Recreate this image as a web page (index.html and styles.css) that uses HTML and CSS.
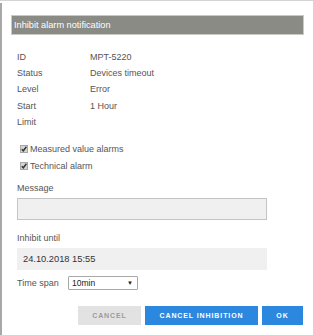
FILE: index.html
```html
<!DOCTYPE html>
<html>
<head>
<meta charset="utf-8">
<link rel="stylesheet" href="styles.css">
</head>
<body>
<div class="frame">
  <div class="dialog">
    <div class="titlebar">Inhibit alarm notification</div>
    <div class="info">
      <div class="row"><span class="lbl">ID</span><span class="val">MPT-5220</span></div>
      <div class="row"><span class="lbl">Status</span><span class="val">Devices timeout</span></div>
      <div class="row"><span class="lbl">Level</span><span class="val">Error</span></div>
      <div class="row"><span class="lbl">Start</span><span class="val">1 Hour</span></div>
      <div class="row"><span class="lbl">Limit</span><span class="val"></span></div>
    </div>
    <div class="checks">
      <label class="check"><svg class="cb" width="8" height="8" viewBox="0 0 8 8"><rect x="0.5" y="0.5" width="7" height="7" fill="#d4d4d4" stroke="#a8a8a8"/><path d="M1.8 4.2 L3.3 5.8 L6.4 1.8" fill="none" stroke="#333" stroke-width="1.4"/></svg>Measured value alarms</label>
      <label class="check"><svg class="cb" width="8" height="8" viewBox="0 0 8 8"><rect x="0.5" y="0.5" width="7" height="7" fill="#d4d4d4" stroke="#a8a8a8"/><path d="M1.8 4.2 L3.3 5.8 L6.4 1.8" fill="none" stroke="#333" stroke-width="1.4"/></svg>Technical alarm</label>
    </div>
    <div class="field-label msg-label">Message</div>
    <div class="msg-box"></div>
    <div class="field-label until-label">Inhibit until</div>
    <div class="until-box">24.10.2018 15:55</div>
    <div class="span-row">
      <span class="span-label">Time span</span>
      <div class="select"><span>10min</span><span class="arrow">▼</span></div>
    </div>
    <div class="buttons">
      <button class="btn btn-cancel">CANCEL</button>
      <button class="btn btn-blue btn-inhibit">CANCEL INHIBITION</button>
      <button class="btn btn-blue btn-ok">OK</button>
    </div>
  </div>
</div>
</body>
</html>
```
FILE: styles.css
```css
html, body {
  margin: 0;
  padding: 0;
  background: #ffffff;
}
body {
  width: 313px;
  height: 335px;
  overflow: hidden;
  font-family: "Liberation Sans", Arial, sans-serif;
  font-size: 9px;
  color: #555555;
}
.frame {
  height: 334px;
  border-top: 1px solid #d4d4d4;
  position: relative;
}
.frame::before {
  content: "";
  position: absolute;
  left: 0;
  top: 2px;
  bottom: 0;
  width: 2px;
  background: #a8a8a8;
}
.dialog {
  padding: 14px 10px 0 11px;
}
.titlebar {
  height: 18px;
  width: 289px;
  background: #8b8b86;
  border: 1px solid #c9c9c6;
  color: #ffffff;
  font-size: 9.2px;
  line-height: 18px;
  padding-left: 2px;
  box-sizing: content-box;
}
.info {
  margin-top: 14px;
  padding-left: 6px;
}
.row {
  display: flex;
  height: 16.2px;
  line-height: 16px;
}
.lbl {
  width: 73px;
}
.checks {
  margin-top: 11px;
  padding-left: 9px;
  display: flex;
  flex-direction: column;
}
.check {
  display: flex;
  align-items: center;
  height: 16.7px;
  gap: 2px;
}
.cb {
  display: block;
}
.field-label {
  padding-left: 6px;
  line-height: 12px;
}
.msg-label {
  margin-top: 8px;
}
.msg-box {
  margin: 4px 0 0 6px;
  width: 248px;
  height: 20px;
  background: #f0f0f0;
  border: 1px solid #c4c4c4;
}
.until-label {
  margin-top: 12px;
}
.until-box {
  margin: 4px 0 0 6px;
  width: 244px;
  height: 22px;
  line-height: 22px;
  padding-left: 6px;
  background: #f0f0f0;
  color: #333333;
  font-size: 9.3px;
}
.span-row {
  display: flex;
  align-items: center;
  margin-top: 5px;
  padding-left: 6px;
  height: 15px;
}
.span-label {
  width: 51px;
}
.select {
  width: 61px;
  height: 12px;
  border: 1px solid #a8a8a8;
  border-radius: 1px;
  display: flex;
  align-items: center;
  justify-content: space-between;
  padding: 0 4px 0 3px;
  color: #222222;
  font-size: 8.5px;
}
.arrow {
  font-size: 6px;
  color: #222;
}
.buttons {
  display: flex;
  justify-content: flex-end;
  gap: 4px;
  margin-top: 16px;
  width: 292px;
}
.btn {
  height: 19px;
  border: none;
  margin: 0;
  padding: 0;
  font-family: "Liberation Sans", Arial, sans-serif;
  font-weight: bold;
  font-size: 7px;
  letter-spacing: 0.9px;
  color: #ffffff;
}
.btn-cancel {
  width: 63px;
  background: #e2e2e2;
  color: #9a9a9a;
}
.btn-blue {
  background: #2c87de;
}
.btn-inhibit {
  width: 113px;
}
.btn-ok {
  width: 41px;
}
```
